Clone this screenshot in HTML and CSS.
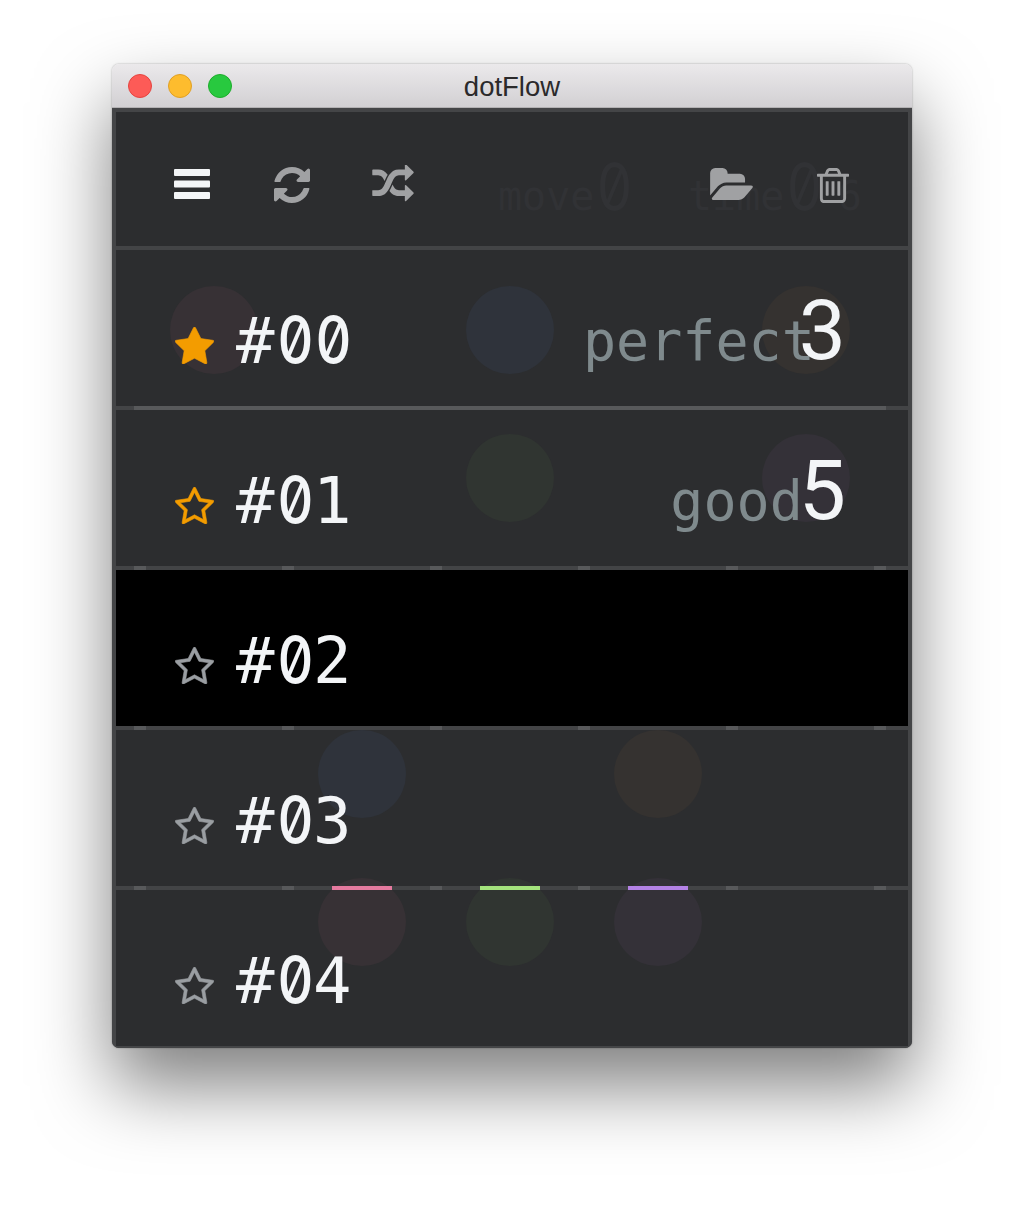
FILE: index.html
```html
<!DOCTYPE html>
<html lang="en">
<head>
    <meta charset="UTF-8">
    <title>dotFlow</title>
    <link rel="stylesheet" href="styles.css">
</head>
<body>
    <svg class="sprites">
        <symbol id="star" viewBox="64 32 1664 1587"><path d="M1728 647q0 22-26 48l-363 354 86 500q1 7 1 20 0 21-10.500 35.500t-30.500 14.500q-19 0-40-12l-449-236-449 236q-22 12-40 12-21 0-31.500-14.500t-10.500-35.500q0-6 2-20l86-500-364-354q-25-27-25-48 0-37 56-46l502-73 225-455q19-41 49-41t49 41l225 455 502 73q56 9 56 46z"/></symbol>
        <symbol id="star-o" viewBox="64 32 1664 1587"><path d="M1201 1004l306-297-422-62-189-382-189 382-422 62 306 297-73 421 378-199 377 199zm527-357q0 22-26 48l-363 354 86 500q1 7 1 20 0 50-41 50-19 0-40-12l-449-236-449 236q-22 12-40 12-21 0-31.500-14.500t-10.500-35.500q0-6 2-20l86-500-364-354q-25-27-25-48 0-37 56-46l502-73 225-455q19-41 49-41t49 41l225 455 502 73q56 9 56 46z"/></symbol>
    </svg>
    <div class="window">
        <header class="titlebar">
            <div class="lights">
                <span class="light red"></span>
                <span class="light yellow"></span>
                <span class="light green"></span>
            </div>
            <h1>dotFlow</h1>
        </header>
        <div class="content">
            <!-- the game board sits behind the level list and shows through it -->
            <div class="board">
                <span class="dot red"></span><span></span><span class="dot blue"></span><span></span><span class="dot orange"></span>
                <span></span><span></span><span class="dot green"></span><span></span><span class="dot purple"></span>
                <span></span><span></span><span></span><span></span><span></span>
                <span></span><span class="dot blue"></span><span></span><span class="dot orange"></span><span></span>
                <span></span><span class="dot red"></span><span class="dot green"></span><span class="dot purple"></span><span></span>
            </div>
            <div class="toolbar">
                <span class="ghost ghost-move">move<b class="zero">0</b></span>
                <span class="ghost ghost-time">time<b class="zero">0</b>6</span>
                <svg class="icon menu" viewBox="0 0 36 30"><rect y="0" width="36" height="7" rx="1"/><rect y="11.500" width="36" height="7" rx="1"/><rect y="23" width="36" height="7" rx="1"/></svg>
                <svg class="icon refresh" viewBox="128 128 1536 1536"><path d="M1639 1056q0 5-1 7-64 268-268 434.500t-478 166.500q-146 0-282.500-55t-243.500-157l-129 129q-19 19-45 19t-45-19-19-45v-448q0-26 19-45t45-19h448q26 0 45 19t19 45-19 45l-137 137q71 66 161 102t187 36q134 0 250-65t186-179q11-17 53-117 8-23 30-23h192q13 0 22.500 9.500t9.500 22.500zm25-800v448q0 26-19 45t-45 19h-448q-26 0-45-19t-19-45 19-45l138-138q-148-137-349-137-134 0-250 65t-186 179q-11 17-53 117-8 23-30 23h-199q-13 0-22.500-9.500t-9.500-22.500v-7q65-268 270-434.500t480-166.500q146 0 284 55.500t245 156.500l130-129q19-19 45-19t45 19 19 45z"/></svg>
                <svg class="icon shuffle" viewBox="0 64 1792 1600"><path d="M666 481q-60 92-137 273-22-45-37-72.500t-40.500-63.500-51-56.500-63-35-81.500-14.500h-224q-14 0-23-9t-9-23v-192q0-14 9-23t23-9h224q250 0 410 225zm1126 799q0 14-9 23l-320 320q-9 9-23 9-13 0-22.500-9.500t-9.500-22.500v-192q-32 0-85 .5t-81 1-73-1-71-5-64-10.500-63-18.500-58-28.500-59-40-55-53.500-56-69q59-93 136-273 22 45 37 72.500t40.500 63.500 51 56.500 63 35 81.500 14.500h256v-192q0-14 9-23t23-9q12 0 24 10l319 319q9 9 9 23zm0-896q0 14-9 23l-320 320q-9 9-23 9-13 0-22.500-9.500t-9.500-22.500v-192h-256q-48 0-87 15t-69 45-51 61.500-45 77.500q-32 62-78 171-29 66-49.500 111t-54 105-64 100-74 83-90 68.500-106.500 42-128 16.500h-224q-14 0-23-9t-9-23v-192q0-14 9-23t23-9h224q48 0 87-15t69-45 51-61.500 45-77.500q32-62 78-171 29-66 49.500-111t54-105 64-100 74-83 90-68.500 106.500-42 128-16.500h256v-192q0-14 9-23t23-9q12 0 24 10l319 319q9 9 9 23z"/></svg>
                <svg class="icon folder" viewBox="0 128 1880 1408"><path d="M1879 952q0 31-31 66l-336 396q-43 51-120.500 86.500t-143.500 35.500h-1088q-34 0-60.500-13t-26.500-43q0-31 31-66l336-396q43-51 120.500-86.500t143.500-35.500h1088q34 0 60.500 13t26.500 43zm-343-344v160h-832q-94 0-197 47.500t-164 119.500l-337 396-5 6q0-4-.5-12.500t-.5-12.500v-960q0-92 66-158t158-66h320q92 0 158 66t66 158v32h544q92 0 158 66t66 158z"/></svg>
                <svg class="icon trash" viewBox="192 128 1408 1536"><path d="M704 736v576q0 14-9 23t-23 9h-64q-14 0-23-9t-9-23v-576q0-14 9-23t23-9h64q14 0 23 9t9 23zm256 0v576q0 14-9 23t-23 9h-64q-14 0-23-9t-9-23v-576q0-14 9-23t23-9h64q14 0 23 9t9 23zm256 0v576q0 14-9 23t-23 9h-64q-14 0-23-9t-9-23v-576q0-14 9-23t23-9h64q14 0 23 9t9 23zm128 724v-948h-896v948q0 22 7 40.500t14.500 27 10.500 8.500h832q3 0 10.500-8.500t14.500-27 7-40.500zm-672-1076h448l-48-117q-7-9-17-11h-317q-10 2-17 11zm928 32v64q0 14-9 23t-23 9h-96v948q0 83-47 143.500t-113 60.500h-832q-66 0-113-58.500t-47-141.500v-952h-96q-14 0-23-9t-9-23v-64q0-14 9-23t23-9h309l70-167q15-37 54-63t79-26h320q40 0 79 26t54 63l70 167h309q14 0 23 9t9 23z"/></svg>
            </div>
            <div class="divider"></div>

            <div class="level">
                <svg class="star star-gold"><use href="#star"/></svg>
                <span class="name">#<i class="zero">0</i><i class="zero">0</i></span>
                <span class="rating perfect">perfect</span>
                <span class="score">3</span>
            </div>
            <div class="divider long"></div>

            <div class="level">
                <svg class="star star-gold"><use href="#star-o"/></svg>
                <span class="name">#<i class="zero">0</i>1</span>
                <span class="rating good">good</span>
                <span class="score">5</span>
            </div>
            <div class="divider ticks"></div>

            <div class="level current">
                <svg class="star"><use href="#star-o"/></svg>
                <span class="name">#<i class="zero">0</i>2</span>
            </div>
            <div class="divider ticks"></div>

            <div class="level">
                <svg class="star"><use href="#star-o"/></svg>
                <span class="name">#<i class="zero">0</i>3</span>
            </div>
            <div class="divider ticks">
                <span class="seg pink"></span><span class="seg lime"></span><span class="seg violet"></span>
            </div>

            <div class="level">
                <svg class="star"><use href="#star-o"/></svg>
                <span class="name">#<i class="zero">0</i>4</span>
            </div>
        </div>
    </div>
</body>
</html>
```

FILE: styles.css
```css
html, body {
    margin: 0;
    height: 100%;
}
body {
    background-color: #fff;
    font-family: "DejaVu Sans Mono", monospace;
    padding: 64px 112px 0;
    box-sizing: border-box;
    overflow: hidden;
}
.sprites {
    display: none;
}
.window {
    width: 800px;
    height: 984px;
    border-radius: 7px;
    overflow: hidden;
    box-shadow: 0 38px 75px rgba(0, 0, 0, 0.5), 0 0 2px rgba(0, 0, 0, 0.35);
}
.titlebar {
    height: 44px;
    padding-top: 2px;
    box-sizing: border-box;
    position: relative;
    display: flex;
    align-items: center;
    justify-content: center;
    background: linear-gradient(#ebe9eb, #d2d0d3);
    border-bottom: 1px solid #b3b1b3;
}
.titlebar h1 {
    margin: 0;
    font-family: "Liberation Sans", Arial, sans-serif;
    font-size: 27.500px;
    font-weight: normal;
    color: #2b2a2b;
}
.lights {
    position: absolute;
    left: 16px;
    top: 10px;
    display: flex;
    gap: 16px;
}
.light {
    width: 24px;
    height: 24px;
    border-radius: 50%;
    box-sizing: border-box;
}
.light.red { background-color: #fd5b57; border: 1px solid #e5443f; }
.light.yellow { background-color: #fdbc2e; border: 1px solid #e0a024; }
.light.green { background-color: #28c93f; border: 1px solid #1dad2b; }

.content {
    position: relative;
    height: 940px;
    box-sizing: border-box;
    border: 4px solid #444547;
    border-bottom-width: 2px;
    background-color: #2c2d2f;
}
.board {
    position: absolute;
    left: 24px;
    top: 144px;
    display: grid;
    grid-template-columns: repeat(5, 148px);
    grid-auto-rows: 148px;
    place-items: center;
}
.dot {
    width: 88px;
    height: 88px;
    border-radius: 50%;
}
.dot.red { background-color: #373135; }
.dot.blue { background-color: #2f333b; }
.dot.orange { background-color: #353230; }
.dot.green { background-color: #303531; }
.dot.purple { background-color: #343138; }

/* slashed zero, DejaVu only has the dotted one */
.zero {
    display: inline-block;
    width: 0.602em;
    font-family: Inter, sans-serif;
    font-style: normal;
    font-weight: 500;
    font-feature-settings: "zero", "tnum";
    text-align: center;
    transform: scaleX(0.88);
}

.toolbar {
    height: 134px;
    position: relative;
    display: flex;
    align-items: center;
    color: #a0a1a3;
}
.icon {
    position: relative;
    fill: currentColor;
    flex: none;
}
.menu { width: 36px; height: 30px; margin-left: 58px; margin-top: 9px; color: #f3f5f7; }
.refresh { width: 36px; height: 36px; margin-left: 64px; margin-top: 11px; }
.shuffle { width: 42px; height: 37px; margin-left: 62px; margin-top: 9px; }
.folder { width: 43px; height: 32px; margin-left: auto; margin-top: 9px; }
.trash { width: 32px; height: 35px; margin-left: 64px; margin-right: 59px; margin-top: 13px; }
.ghost {
    position: absolute;
    color: #313235;
    font-size: 40px;
    line-height: 60px;
    white-space: nowrap;
}
.ghost b {
    font-size: 64px;
    font-weight: normal;
}
.ghost-move { left: 382px; top: 45px; }
.ghost-time { left: 572px; top: 45px; }
.ghost-time b { margin-right: 15px; }

.divider {
    height: 4px;
    position: relative;
    background-color: #434446;
}
.divider.long {
    background: linear-gradient(#58595b, #58595b) 18px 0 / 752px 4px no-repeat #434446;
}
.divider.ticks {
    background-image: repeating-linear-gradient(90deg, #58595b 0 12px, transparent 12px 148px);
    background-position: 18px 0;
    background-size: 752px 4px;
    background-repeat: no-repeat;
}
.seg {
    position: absolute;
    top: 0;
    width: 60px;
    height: 4px;
}
.seg.pink { left: 216px; background-color: #e57a9f; }
.seg.lime { left: 364px; background-color: #a3e37c; }
.seg.violet { left: 512px; background-color: #b482e6; }

.level {
    height: 156px;
    position: relative;
    display: flex;
    align-items: flex-end;
    padding: 0 62px 0 59px;
    box-sizing: border-box;
    color: #f3f5f7;
}
.level.current { background-color: #000; }
.star {
    flex: none;
    width: 39px;
    height: 37px;
    margin-bottom: 42px;
    fill: #9a9ea2;
    stroke: #9a9ea2;
    stroke-width: 26;
}
.star-gold { fill: #f39c00; stroke: #f39c00; }
.name {
    font-size: 64px;
    line-height: 70px;
    margin-left: 22px;
    margin-bottom: 30px;
}
.rating {
    margin-left: auto;
    font-size: 55px;
    line-height: 70px;
    margin-bottom: 30px;
    color: #7f8a8d;
}
.rating.perfect { margin-right: -16px; }
.rating.good { margin-right: -4px; }
.score {
    position: relative;
    font-family: Roboto, "Liberation Sans", sans-serif;
    font-size: 84px;
    line-height: 90px;
    margin-bottom: 30px;
}
```
